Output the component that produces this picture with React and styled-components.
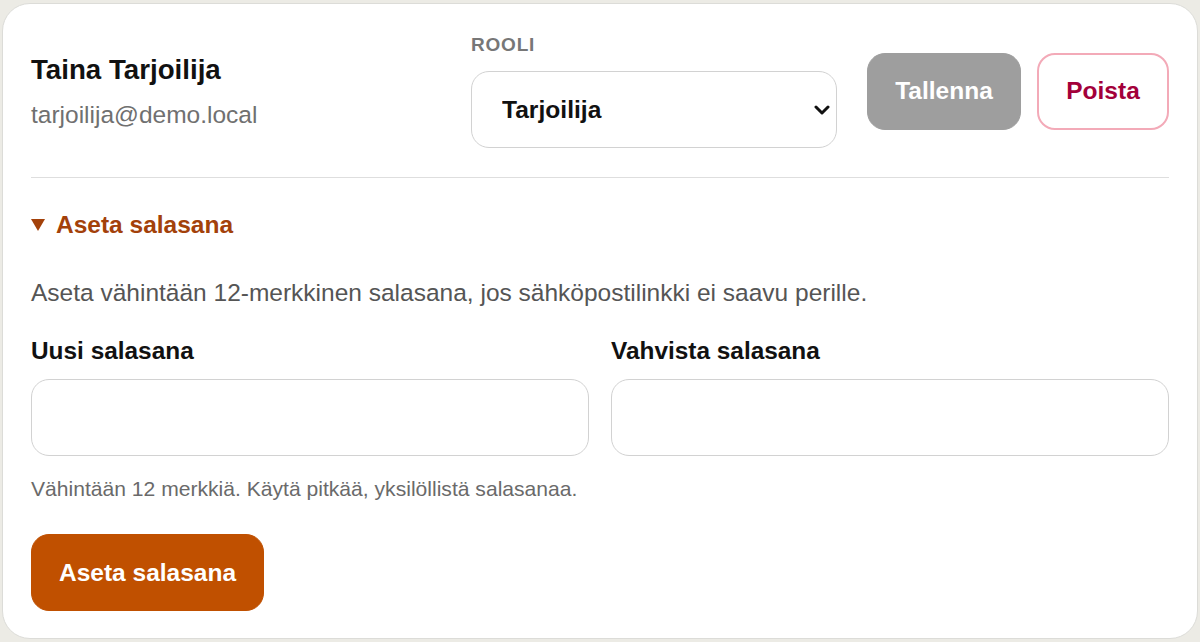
import React from 'react';
import styled, { createGlobalStyle } from 'styled-components';

const GlobalStyle = createGlobalStyle`
  html, body {
    margin: 0;
    padding: 0;
    background: #ecebe5;
    font-family: "Liberation Sans", Arial, sans-serif;
  }
  * { box-sizing: border-box; }
`;

const Page = styled.div`
  padding: 3px 2px;
  height: 642px;
`;

const Card = styled.div`
  background: #fff;
  border: 1px solid #dcdcd8;
  border-radius: 28px;
  padding: 30px 28px 28px 28px;
  height: 636px;
`;

const Header = styled.div`
  display: flex;
  align-items: center;
  gap: 30px;
  padding-bottom: 29px;
  border-bottom: 1px solid #dedede;
`;

const Who = styled.div`
  flex: 1;
  display: flex;
  flex-direction: column;
  gap: 15px;
`;

const Name = styled.div`
  font-size: 27.7px;
  font-weight: 700;
  color: #111;
`;

const Email = styled.div`
  font-size: 24.5px;
  color: #707070;
`;

const RoleField = styled.div`
  width: 366px;
  display: flex;
  flex-direction: column;
  gap: 15px;
`;

const SmallLabel = styled.label`
  font-size: 19px;
  font-weight: 700;
  color: #777;
  letter-spacing: 0.8px;
`;

const SelectWrap = styled.div`
  position: relative;
`;

const Select = styled.select`
  appearance: none;
  width: 100%;
  height: 77px;
  border: 1px solid #d2d2d2;
  border-radius: 18px;
  background: #fff;
  padding: 0 40px 0 30px;
  font-family: inherit;
  font-size: 24.6px;
  font-weight: 700;
  color: #111;
`;

const Chevron = styled.svg`
  position: absolute;
  right: 7px;
  top: 34px;
  pointer-events: none;
`;

const Actions = styled.div`
  display: flex;
  gap: 16px;
`;

const Button = styled.button`
  height: 77px;
  min-width: ${p => p.$w || 'auto'};
  padding: 0 27px;
  border-radius: 18px;
  font-family: inherit;
  font-size: 24.5px;
  font-weight: 700;
  cursor: pointer;
  border: ${p => p.$bw || '1.5px'} solid ${p => p.$border};
  background: ${p => p.$bg};
  color: ${p => p.$color};
`;

const Details = styled.details`
  padding-top: 33px;
  summary {
    list-style: none;
    font-size: 24.5px;
    font-weight: 700;
    color: #a3410a;
    cursor: pointer;
    display: flex;
    align-items: center;
    gap: 11px;
  }
  summary::-webkit-details-marker { display: none; }
`;

const Intro = styled.p`
  margin: 40px 0 0 0;
  font-size: 24.5px;
  color: #555;
`;

const Fields = styled.div`
  margin-top: 30px;
  display: grid;
  grid-template-columns: 1fr 1fr;
  gap: 22px;
`;

const Field = styled.div`
  display: flex;
  flex-direction: column;
  gap: 14px;
`;

const FieldLabel = styled.label`
  font-size: 24.4px;
  font-weight: 700;
  color: #111;
`;

const Input = styled.input`
  height: 77px;
  border: 1px solid #d2d2d2;
  border-radius: 18px;
  padding: 0 20px;
  font-size: 24px;
  font-family: inherit;
`;

const Hint = styled.div`
  margin-top: 21px;
  font-size: 21.1px;
  color: #6a6a6a;
`;

const Submit = styled(Button)`
  margin-top: 33px;
`;

export default function App() {
  return (
    <>
      <GlobalStyle />
      <Page>
        <Card>
          <Header>
            <Who>
              <Name>Taina Tarjoilija</Name>
              <Email>tarjoilija@demo.local</Email>
            </Who>
            <RoleField>
              <SmallLabel>ROOLI</SmallLabel>
              <SelectWrap>
                <Select defaultValue="Tarjoilija">
                  <option>Tarjoilija</option>
                  <option>Keittiö</option>
                  <option>Ylläpitäjä</option>
                </Select>
                <Chevron width="16" height="10" viewBox="0 0 16 10">
                  <path d="M2 2 L8 8 L14 2" fill="none" stroke="#111" strokeWidth="3" strokeLinecap="round" strokeLinejoin="round" />
                </Chevron>
              </SelectWrap>
            </RoleField>
            <Actions>
              <Button $w="154px" $bg="#9e9e9e" $border="#9e9e9e" $color="#fff">Tallenna</Button>
              <Button $w="132px" $bw="2px" $bg="#fff" $border="#f3aab8" $color="#a3003a">Poista</Button>
            </Actions>
          </Header>
          <Details open>
            <summary>
              <svg width="14" height="12" viewBox="0 0 14 12">
                <path d="M0 0 H14 L7 12 Z" fill="#a3410a" />
              </svg>
              Aseta salasana
            </summary>
            <Intro>Aseta vähintään 12-merkkinen salasana, jos sähköpostilinkki ei saavu perille.</Intro>
            <Fields>
              <Field>
                <FieldLabel>Uusi salasana</FieldLabel>
                <Input type="password" />
              </Field>
              <Field>
                <FieldLabel>Vahvista salasana</FieldLabel>
                <Input type="password" />
              </Field>
            </Fields>
            <Hint>Vähintään 12 merkkiä. Käytä pitkää, yksilöllistä salasanaa.</Hint>
            <Submit $bg="#c05000" $border="#c05000" $color="#fff">Aseta salasana</Submit>
          </Details>
        </Card>
      </Page>
    </>
  );
}
